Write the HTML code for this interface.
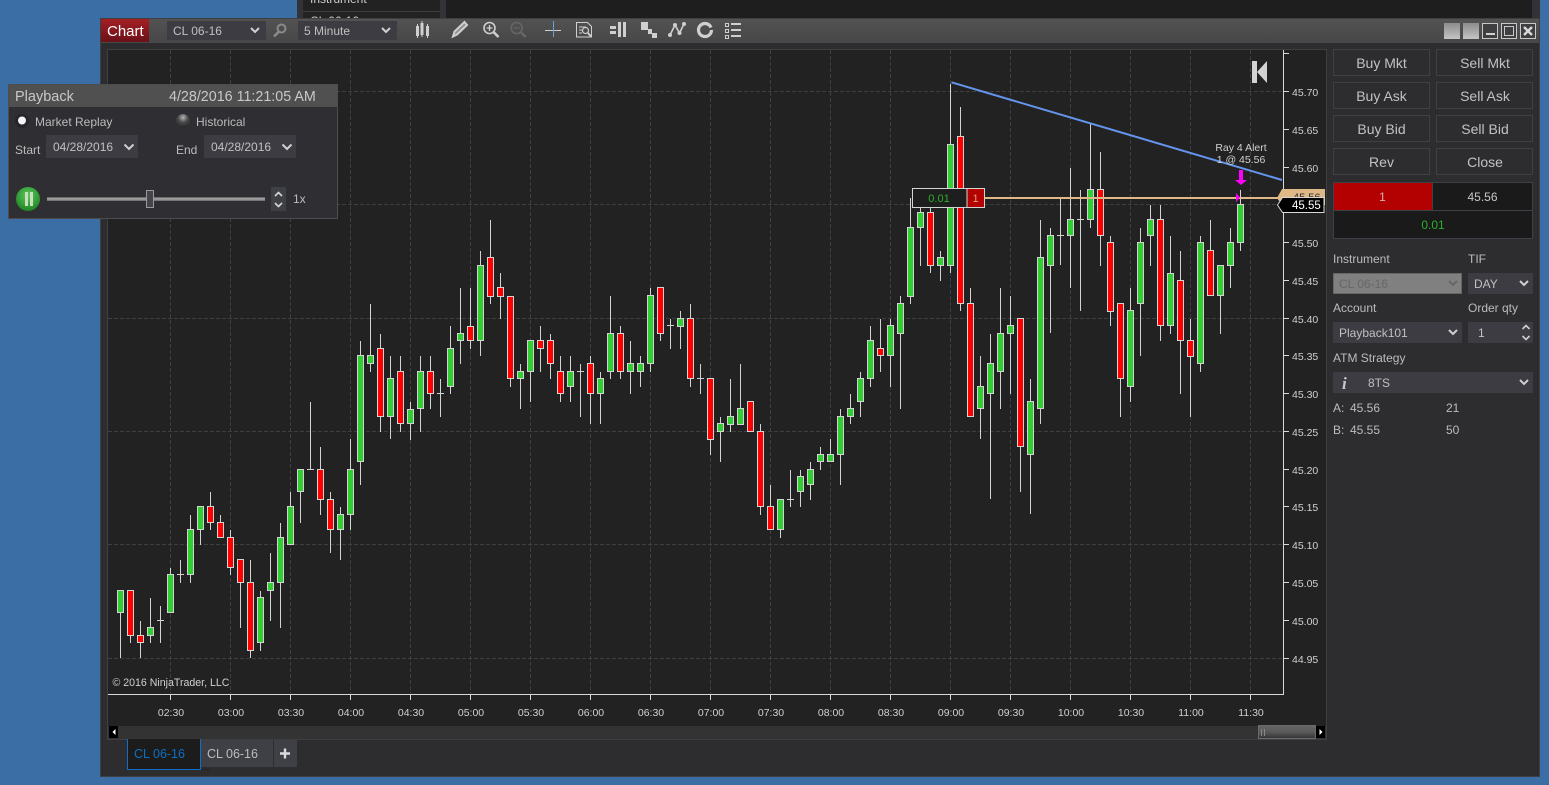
<!DOCTYPE html>
<html><head><meta charset="utf-8"><title>Chart</title>
<style>
html,body{margin:0;padding:0;background:#3a6ea5;overflow:hidden}
svg{display:block;position:absolute;left:0;top:0;font-family:"Liberation Sans",Arial,sans-serif}
text{white-space:pre}
.a text{font-size:10.5px;fill:#d0d0d0}
.tm text{font-size:10.5px;fill:#d0d0d0;text-anchor:middle}
.lb{font-size:12px;fill:#bcbcbc}
.btn{font-size:14px;fill:#c2c2c2;text-anchor:middle}
</style></head>
<body>
<svg width="1549" height="785" viewBox="0 0 1549 785" xmlns="http://www.w3.org/2000/svg">
<defs>
<linearGradient id="tb" x1="0" y1="0" x2="0" y2="1"><stop offset="0" stop-color="#525252"/><stop offset="1" stop-color="#474747"/></linearGradient>
<linearGradient id="rd" x1="0" y1="0" x2="0" y2="1"><stop offset="0" stop-color="#a31f24"/><stop offset="1" stop-color="#6b1118"/></linearGradient>
<linearGradient id="gb" x1="0" y1="0" x2="0" y2="1"><stop offset="0" stop-color="#8c8c8c"/><stop offset="1" stop-color="#c4c4c4"/></linearGradient>
<linearGradient id="sl" x1="0" y1="0" x2="0" y2="1"><stop offset="0" stop-color="#555"/><stop offset=".45" stop-color="#aaa"/><stop offset="1" stop-color="#666"/></linearGradient>
<linearGradient id="th" x1="0" y1="0" x2="0" y2="1"><stop offset="0" stop-color="#666"/><stop offset=".5" stop-color="#5a5a5a"/><stop offset="1" stop-color="#333"/></linearGradient>
<radialGradient id="gr" cx=".5" cy=".35" r=".7"><stop offset="0" stop-color="#5ec85e"/><stop offset="1" stop-color="#1b801f"/></radialGradient>
<radialGradient id="rad" cx=".5" cy=".25" r=".7"><stop offset="0" stop-color="#b5b5b5"/><stop offset=".5" stop-color="#4a4a4a"/><stop offset="1" stop-color="#2a2a2a"/></radialGradient>
</defs>

<!-- desktop -->
<rect width="1549" height="785" fill="#3a6ea5"/>
<!-- window behind -->
<rect x="297" y="0" width="1243" height="20" fill="#333337"/>
<rect x="303" y="0" width="137" height="20" fill="#222"/>
<rect x="303" y="11" width="137" height="1" fill="#3f3f3f"/>
<rect x="446" y="0" width="1086" height="20" fill="#1e1e1e"/>
<text x="310" y="3" font-size="12" fill="#ccc">Instrument</text>
<text x="310" y="25" font-size="12" fill="#ccc">CL 06-16</text>

<!-- main window -->
<rect x="100" y="18" width="1439.5" height="759" fill="#2d2d30"/>
<rect x="100.5" y="18.5" width="1439" height="758" fill="none" stroke="#3f3f41"/>
<rect x="101" y="19" width="1438" height="24" fill="url(#tb)"/>
<rect x="101" y="19" width="48" height="23" fill="url(#rd)"/>
<text x="107" y="36" font-size="15" fill="#fff">Chart</text>
<rect x="167" y="21" width="99" height="19" fill="#3c3c42"/>
<text x="173" y="35" font-size="12" fill="#c0c0c0">CL 06-16</text>
<path d="M251 28l4 4 4-4" fill="none" stroke="#d0d0d0" stroke-width="2"/>
<circle cx="281.5" cy="28.5" r="4" fill="none" stroke="#8a8a8a" stroke-width="2"/>
<path d="M278.5 32L274 36.5" stroke="#8a8a8a" stroke-width="2.5"/>
<rect x="298" y="21" width="99" height="19" fill="#3c3c42"/>
<text x="304" y="35" font-size="12" fill="#c0c0c0">5 Minute</text>
<path d="M382 28l4 4 4-4" fill="none" stroke="#d0d0d0" stroke-width="2"/>

<!-- toolbar icons -->
<g fill="#cfcfcf" stroke="none">
<path d="M416 26h3v10h-3zM417 24h1v14h-1zM420.5 23h3v12h-3zM421.5 21h1v16h-1zM426 26h3v10h-3zM427 24h1v14h-1z"/>
</g>
<g fill="none" stroke="#cfcfcf">
<path d="M453 36.500l1.500-5 10-9.500 2.500 3-10 9.500z" stroke-width="2" fill="#8f8f8f"/>
<circle cx="489.5" cy="28" r="5.5" stroke-width="1.6"/>
<path d="M486.5 28h6M489.5 25v6" stroke-width="1.3"/>
<path d="M493.5 32l5 5" stroke-width="2.6"/>
<g stroke="#666"><circle cx="516.7" cy="28" r="5.5" stroke-width="1.6"/><path d="M513.7 28h6" stroke-width="1.3"/><path d="M520.7 32l5 5" stroke-width="2.6"/></g>
<path d="M545 30.5h16" stroke="#cfcfcf" stroke-width="1"/>
<path d="M553.5 21v16" stroke="#6f9fd8" stroke-width="1"/>
<path d="M576.5 22.5h11l4 4v10.5h-15z" stroke-width="1"/>
<path d="M579 27h7M579 30h3M579 33h3" stroke-width="1"/>
<circle cx="585.5" cy="30.5" r="3" stroke-width="1.2"/><path d="M588 33l3 3.5" stroke-width="2"/>
</g>
<g fill="#cfcfcf">
<path d="M610 26h6v3h-6zM610 31h6v3h-6zM618 22h3v15h-3zM623 22h3v15h-3z"/>
<path d="M641 22h7v8h-7zM648 29h4v5h-4zM652 33h5v5h-5z"/>
<circle cx="670" cy="35" r="2"/><circle cx="675" cy="25" r="2"/><circle cx="679.5" cy="33" r="2"/><circle cx="684" cy="24" r="2"/>
<path d="M725.500 23.500h3v3h-3zM725.500 29.500h3v3h-3zM725.500 35.500h3v3h-3z" fill="none" stroke="#cfcfcf" stroke-width="1"/>
<path d="M731 23h10v2h-10zM731 29h10v2h-10zM731 35h10v2h-10z"/>
</g>
<path d="M670 35l5-10 4.500 8L684 24" fill="none" stroke="#cfcfcf" stroke-width="1.6"/>
<path d="M711 27.500A6.500 6.500 0 1 0 711.500 30" fill="none" stroke="#cfcfcf" stroke-width="3.2"/>

<!-- window controls -->
<rect x="1444" y="23" width="16" height="16" fill="url(#gb)"/>
<rect x="1463" y="23" width="16" height="16" fill="url(#gb)"/>
<rect x="1482.5" y="23.5" width="15" height="15" fill="#3f3f41" stroke="#c8c8c8"/>
<rect x="1486" y="33" width="9" height="2" fill="#d0d0d0"/>
<rect x="1501.5" y="23.5" width="15" height="15" fill="#3f3f41" stroke="#c8c8c8"/>
<rect x="1504.5" y="26.5" width="9" height="9" fill="none" stroke="#c8c8c8"/>
<rect x="1520.5" y="23.5" width="15" height="15" fill="#3f3f41" stroke="#c8c8c8"/>
<path d="M1524 27l8 8M1532 27l-8 8" stroke="#d8d8d8" stroke-width="2.4"/>

<!-- chart panel -->
<rect x="107.5" y="49.5" width="1219" height="690" fill="#222" stroke="#3f3f41"/>
<g stroke="#3f3f3f" stroke-width="1" stroke-dasharray="4 2" fill="none">
<path d="M170.5 50V694M230.5 50V694M290.5 50V694M350.5 50V694M410.5 50V694M470.5 50V694M530.5 50V694M590.5 50V694M650.5 50V694M710.5 50V694M770.5 50V694M830.5 50V694M890.5 50V694M950.5 50V694M1010.5 50V694M1070.5 50V694M1130.5 50V694M1190.5 50V694M1250.5 50V694"/>
<path d="M108 91.5H1283M108 204.5H1283M108 318.5H1283M108 431.5H1283M108 544.5H1283M108 658.5H1283"/>
</g>

<!-- wicks -->
<path stroke="#d3d3d3" stroke-width="1" fill="none" d="M120.5 590V658M130.5 590V643M140.5 621V658M150.5 598V643M160.5 606V643M170.5 568V612M180.5 560V583M190.5 515V583M200.5 506V545M210.5 492V530M220.5 515V537M230.5 530V575M240.5 559V628M250.5 560V658M260.5 591V651M270.5 553V621M280.5 523V628M290.5 492V544M300.5 469V523M310.5 402V469M320.5 447V515M330.5 492V553M340.5 507V560M350.5 439V530M360.5 341V485M370.5 304V372M380.5 334V432M390.5 356V439M400.5 356V432M410.5 402V440M420.5 356V432M430.5 356V409M440.5 379V417M450.5 326V394M460.5 288V364M470.5 288V349M480.5 251V356M490.5 220V304M500.5 273V319M510.5 296V387M520.5 364V409M530.5 340V402M540.5 326V372M550.5 334V379M560.5 356V402M570.5 356V402M580.5 364V417M590.5 356V424M600.5 372V424M610.5 296V379M620.5 326V379M630.5 341V394M640.5 356V387M650.5 288V372M660.5 287V341M670.5 319V349M680.5 311V349M690.5 304V387M700.5 364V394M710.5 378V455M720.5 417V462M730.5 379V432M740.5 364V424M760.5 424V515M770.5 485V529M780.5 499V538M790.5 470V507M800.5 470V507M810.5 462V500M820.5 447V470M830.5 439V461M840.5 409V485M850.5 394V424M860.5 372V417M870.5 326V387M880.5 319V372M890.5 319V387M900.5 296V409M910.5 198V304M920.5 190V266M930.5 190V273M940.5 251V281M950.5 84V273M960.5 107V311M970.5 288V416M980.5 356V439M990.5 334V499M1000.5 288V409M1010.5 296V394M1020.5 318V492M1030.5 379V514M1040.5 220V424M1050.5 228V333M1060.5 198V265M1070.5 168V288M1080.5 190V311M1090.5 123V228M1100.5 152V266M1110.5 236V326M1120.5 303V417M1130.5 288V402M1140.5 228V356M1150.5 205V266M1160.5 205V341M1170.5 236V334M1180.5 251V394M1190.5 319V417M1200.5 236V372M1210.5 220V295M1220.5 265V334M1230.5 228V288M1240.5 190V251"/>
<!-- doji -->
<path stroke="#d3d3d3" stroke-width="1" fill="none" d="M157 620.5h7M177 574.5h7M307 469.5h7M437 393.5h7M577 371.5h7M667 325.5h7M697 378.5h7M787 499.5h7M1057 235.5h7M1077 219.5h7"/>
<!-- green bodies -->
<path fill="#32cd32" stroke="#d3d3d3" stroke-width="1" d="M117.5 590.5h6v22h-6zM147.5 627.5h6v8h-6zM167.5 574.5h6v38h-6zM187.5 529.5h6v45h-6zM197.5 506.5h6v23h-6zM257.5 597.5h6v45h-6zM267.5 582.5h6v8h-6zM277.5 537.5h6v45h-6zM287.5 506.5h6v38h-6zM297.5 469.5h6v22h-6zM337.5 514.5h6v15h-6zM347.5 469.5h6v45h-6zM357.5 355.5h6v106h-6zM367.5 355.5h6v8h-6zM387.5 378.5h6v38h-6zM407.5 409.5h6v14h-6zM417.5 371.5h6v37h-6zM447.5 348.5h6v38h-6zM457.5 333.5h6v7h-6zM477.5 265.5h6v75h-6zM517.5 371.5h6v7h-6zM527.5 340.5h6v31h-6zM567.5 371.5h6v15h-6zM597.5 378.5h6v15h-6zM607.5 333.5h6v38h-6zM627.5 363.5h6v8h-6zM637.5 363.5h6v8h-6zM647.5 295.5h6v68h-6zM677.5 318.5h6v8h-6zM717.5 423.5h6v8h-6zM727.5 416.5h6v8h-6zM737.5 408.5h6v16h-6zM777.5 499.5h6v30h-6zM797.5 476.5h6v15h-6zM807.5 469.5h6v15h-6zM817.5 454.5h6v7h-6zM827.5 454.5h6v7h-6zM837.5 416.5h6v38h-6zM847.5 408.5h6v8h-6zM857.5 378.5h6v23h-6zM867.5 340.5h6v38h-6zM887.5 325.5h6v30h-6zM897.5 303.5h6v30h-6zM907.5 227.5h6v69h-6zM917.5 212.5h6v15h-6zM937.5 257.5h6v8h-6zM947.5 144.5h6v121h-6zM977.5 386.5h6v22h-6zM987.5 363.5h6v30h-6zM997.5 333.5h6v38h-6zM1007.5 325.5h6v8h-6zM1027.5 401.5h6v53h-6zM1037.5 257.5h6v151h-6zM1047.5 235.5h6v30h-6zM1067.5 219.5h6v16h-6zM1087.5 189.5h6v30h-6zM1127.5 310.5h6v76h-6zM1137.5 242.5h6v61h-6zM1147.5 219.5h6v16h-6zM1167.5 273.5h6v52h-6zM1197.5 242.5h6v121h-6zM1217.5 265.5h6v30h-6zM1227.5 242.5h6v23h-6zM1237.5 204.5h6v38h-6z"/>
<!-- red bodies -->
<path fill="#ff0000" stroke="#d3d3d3" stroke-width="1" d="M127.5 590.5h6v45h-6zM137.5 635.5h6v7h-6zM207.5 506.5h6v16h-6zM217.5 522.5h6v15h-6zM227.5 537.5h6v30h-6zM237.5 559.5h6v23h-6zM247.5 582.5h6v68h-6zM317.5 469.5h6v30h-6zM327.5 499.5h6v30h-6zM377.5 348.5h6v68h-6zM397.5 371.5h6v52h-6zM427.5 371.5h6v22h-6zM467.5 326.5h6v14h-6zM487.5 257.5h6v39h-6zM497.5 287.5h6v9h-6zM507.5 296.5h6v82h-6zM537.5 340.5h6v8h-6zM547.5 340.5h6v23h-6zM557.5 371.5h6v22h-6zM587.5 363.5h6v30h-6zM617.5 333.5h6v38h-6zM657.5 287.5h6v46h-6zM687.5 318.5h6v60h-6zM707.5 378.5h6v61h-6zM747.5 401.5h6v30h-6zM757.5 431.5h6v75h-6zM767.5 506.5h6v23h-6zM877.5 348.5h6v7h-6zM927.5 212.5h6v53h-6zM957.5 136.5h6v167h-6zM967.5 303.5h6v113h-6zM1017.5 318.5h6v128h-6zM1097.5 189.5h6v46h-6zM1107.5 242.5h6v69h-6zM1117.5 303.5h6v75h-6zM1157.5 219.5h6v106h-6zM1177.5 280.5h6v60h-6zM1187.5 340.5h6v16h-6zM1207.5 250.5h6v45h-6z"/>

<!-- axes -->
<path d="M108 694.5H1283.5V50" fill="none" stroke="#d8d8d8" stroke-width="1"/>
<path stroke="#d8d8d8" d="M1284 53.5h5M1284 91.5h5M1284 129.5h5M1284 167.5h5M1284 242.5h5M1284 280.5h5M1284 318.5h5M1284 355.5h5M1284 393.5h5M1284 431.5h5M1284 469.5h5M1284 506.5h5M1284 544.5h5M1284 582.5h5M1284 620.5h5M1284 658.5h5"/>
<path stroke="#d8d8d8" d="M170.5 695v5M230.5 695v5M290.5 695v5M350.5 695v5M410.5 695v5M470.5 695v5M530.5 695v5M590.5 695v5M650.5 695v5M710.5 695v5M770.5 695v5M830.5 695v5M890.5 695v5M950.5 695v5M1010.5 695v5M1070.5 695v5M1130.5 695v5M1190.5 695v5M1250.5 695v5"/>
<g class="a">
<text x="1292" y="96">45.70</text><text x="1292" y="134">45.65</text><text x="1292" y="172">45.60</text>
<text x="1292" y="247">45.50</text><text x="1292" y="285">45.45</text><text x="1292" y="323">45.40</text>
<text x="1292" y="360">45.35</text><text x="1292" y="398">45.30</text><text x="1292" y="436">45.25</text>
<text x="1292" y="474">45.20</text><text x="1292" y="511">45.15</text><text x="1292" y="549">45.10</text>
<text x="1292" y="587">45.05</text><text x="1292" y="625">45.00</text><text x="1292" y="663">44.95</text>
</g>
<g class="tm">
<text x="171" y="716">02:30</text><text x="231" y="716">03:00</text><text x="291" y="716">03:30</text><text x="351" y="716">04:00</text>
<text x="411" y="716">04:30</text><text x="471" y="716">05:00</text><text x="531" y="716">05:30</text><text x="591" y="716">06:00</text>
<text x="651" y="716">06:30</text><text x="711" y="716">07:00</text><text x="771" y="716">07:30</text><text x="831" y="716">08:00</text>
<text x="891" y="716">08:30</text><text x="951" y="716">09:00</text><text x="1011" y="716">09:30</text><text x="1071" y="716">10:00</text>
<text x="1131" y="716">10:30</text><text x="1191" y="716">11:00</text><text x="1251" y="716">11:30</text>
</g>
<text x="112.500" y="686" font-size="10.600" fill="#d0d0d0">© 2016 NinjaTrader, LLC</text>

<!-- K icon -->
<path d="M1252 61h5v22h-5zM1267 61v22l-10-11z" fill="#d3d3d3"/>

<!-- drawings -->
<path d="M951.500 82.300L1282 180" stroke="#6495ed" stroke-width="2" fill="none"/>
<rect x="985" y="197" width="293" height="2" fill="#deb887"/>
<text x="1241" y="151" font-size="10.5" fill="#d0d0d0" text-anchor="middle">Ray 4 Alert</text>
<text x="1241" y="163" font-size="10.5" fill="#d0d0d0" text-anchor="middle">1 @ 45.56</text>
<path d="M1239 170h4v10h4l-6 5-6-5h4z" fill="#ff00ff"/>
<path d="M1236 193l4 4.500-4 4.500z" fill="#ff00ff"/>

<!-- position label -->
<rect x="912.500" y="188.500" width="55" height="19" fill="#1e1e1e" stroke="#d3d3d3"/>
<rect x="967" y="188.500" width="17.500" height="19" fill="#b30000" stroke="#d3d3d3"/>
<text x="939" y="202" font-size="11" fill="#2ab02a" text-anchor="middle">0.01</text>
<text x="975.500" y="202" font-size="11" fill="#e0a070" text-anchor="middle">1</text>

<!-- price tags -->
<path d="M1277 198l5-9h43v16h-43z" fill="#deb887"/>
<text x="1293" y="201" font-size="11" fill="#333">45.56</text>
<path d="M1277.500 205l5-7.500h41.500v15h-41.500z" fill="#000" stroke="#d8d8d8"/>
<text x="1292" y="209" font-size="11.500" fill="#fff">45.55</text>

<!-- scrollbar -->
<rect x="108" y="726" width="1218" height="13" fill="#333"/>
<rect x="109" y="726" width="9" height="12" fill="#000"/>
<path d="M115.500 729v6l-3-3z" fill="#fff"/>
<rect x="1258.500" y="725.500" width="57" height="13" fill="url(#th)" stroke="#6a6a6a"/>
<path d="M1261.500 729v7M1264.500 729v7" stroke="#888"/>
<rect x="1316" y="726" width="9" height="12" fill="#000"/>
<path d="M1319.500 729v6l3-3z" fill="#fff"/>

<!-- tabs -->
<rect x="127.500" y="739" width="73" height="30.500" fill="#1c1c1c"/>
<path d="M127.500 739v30.500h73V739" fill="none" stroke="#0f6fc6"/>
<rect x="201" y="769" width="9" height="1" fill="#222"/>
<text x="134" y="758" font-size="12.500" fill="#0f6fc0">CL 06-16</text>
<rect x="201" y="740" width="72" height="27" fill="#3f3f46"/>
<text x="207" y="758" font-size="12.500" fill="#bdbdbd">CL 06-16</text>
<rect x="274" y="740" width="23" height="27" fill="#3f3f46"/>
<path d="M285 748.500v10M280 753.500h10" stroke="#dcdcdc" stroke-width="2.400"/>

<!-- right panel buttons -->
<g fill="#2d2d30" stroke="#3f3f46">
<rect x="1333.500" y="49.500" width="96" height="26"/><rect x="1436.500" y="49.500" width="96" height="26"/>
<rect x="1333.500" y="82.500" width="96" height="26"/><rect x="1436.500" y="82.500" width="96" height="26"/>
<rect x="1333.500" y="115.500" width="96" height="26"/><rect x="1436.500" y="115.500" width="96" height="26"/>
<rect x="1333.500" y="148.500" width="96" height="26"/><rect x="1436.500" y="148.500" width="96" height="26"/>
</g>
<text class="btn" x="1381.500" y="68">Buy Mkt</text><text class="btn" x="1485" y="68">Sell Mkt</text>
<text class="btn" x="1381.500" y="101">Buy Ask</text><text class="btn" x="1485" y="101">Sell Ask</text>
<text class="btn" x="1381.500" y="134">Buy Bid</text><text class="btn" x="1485" y="134">Sell Bid</text>
<text class="btn" x="1381.500" y="167">Rev</text><text class="btn" x="1485" y="167">Close</text>

<!-- position box -->
<rect x="1333.500" y="182.500" width="199" height="56" fill="#1a1a1a" stroke="#3f3f46"/>
<rect x="1334" y="183" width="98" height="27" fill="#b30000"/>
<path d="M1334 210.500h198M1432.500 183v27" stroke="#3f3f46"/>
<text x="1382.500" y="201" font-size="12" fill="#d8b0b0" text-anchor="middle">1</text>
<text x="1482.500" y="201" font-size="12" fill="#c8c8c8" text-anchor="middle">45.56</text>
<text x="1433" y="229" font-size="12" fill="#2ab02a" text-anchor="middle">0.01</text>

<!-- order form -->
<text class="lb" x="1333" y="263">Instrument</text><text class="lb" x="1468" y="263">TIF</text>
<rect x="1333.500" y="273.500" width="128" height="20" fill="#808080" stroke="#666"/>
<text x="1339" y="288" font-size="12" fill="#666">CL 06-16</text>
<path d="M1449 281l4 4 4-4" fill="none" stroke="#666" stroke-width="2"/>
<rect x="1468" y="273" width="65" height="21" fill="#3c3c42"/>
<text x="1474" y="288" font-size="12" fill="#c0c0c0">DAY</text>
<path d="M1520 281l4 4 4-4" fill="none" stroke="#d0d0d0" stroke-width="2"/>
<text class="lb" x="1333" y="312">Account</text><text class="lb" x="1468" y="312">Order qty</text>
<rect x="1333" y="322" width="129" height="21" fill="#3c3c42"/>
<text x="1339" y="337" font-size="12" fill="#c0c0c0">Playback101</text>
<path d="M1449 330l4 4 4-4" fill="none" stroke="#d0d0d0" stroke-width="2"/>
<rect x="1468" y="322" width="65" height="21" fill="#3c3c42"/>
<text x="1478" y="337" font-size="12" fill="#c0c0c0">1</text>
<path d="M1522.500 329l3.500-3.500 3.500 3.500M1522.500 336l3.500 3.500 3.500-3.500" fill="none" stroke="#d0d0d0" stroke-width="1.600"/>
<text class="lb" x="1333" y="362">ATM Strategy</text>
<rect x="1333" y="372" width="200" height="21" fill="#3c3c42"/>
<text x="1342" y="389" font-size="17" font-style="italic" font-weight="bold" fill="#c8c8c8" font-family="Liberation Serif,serif">i</text>
<text x="1368" y="387" font-size="12" fill="#c0c0c0">8TS</text>
<path d="M1520 380l4 4 4-4" fill="none" stroke="#d0d0d0" stroke-width="2"/>
<text class="lb" x="1333" y="412">A:</text><text class="lb" x="1350" y="412">45.56</text><text class="lb" x="1446" y="412">21</text>
<text class="lb" x="1333" y="434">B:</text><text class="lb" x="1350" y="434">45.55</text><text class="lb" x="1446" y="434">50</text>

<!-- playback panel -->
<rect x="8.500" y="84.500" width="329" height="134" fill="#2e2e33" stroke="#4d4d4d"/>
<rect x="9" y="85" width="328" height="22" fill="#505050"/>
<text x="15" y="101" font-size="14.500" fill="#c8c8c8">Playback</text>
<text x="169" y="101" font-size="14.300" fill="#c8c8c8">4/28/2016 11:21:05 AM</text>
<circle cx="22" cy="121" r="7" fill="#26262a"/>
<circle cx="22" cy="120.500" r="4" fill="#f4f4f4"/>
<text class="lb" x="35" y="126">Market Replay</text>
<circle cx="183" cy="121" r="7" fill="url(#rad)"/>
<text class="lb" x="196" y="126">Historical</text>
<text class="lb" x="15" y="154">Start</text>
<rect x="46" y="135" width="92" height="23" fill="#3c3c42"/>
<text x="53" y="151" font-size="12" fill="#c0c0c0">04/28/2016</text>
<path d="M124.500 144.500l4.500 4.500 4.500-4.500" fill="none" stroke="#d0d0d0" stroke-width="2"/>
<text class="lb" x="176" y="154">End</text>
<rect x="204" y="135" width="92" height="23" fill="#3c3c42"/>
<text x="211" y="151" font-size="12" fill="#c0c0c0">04/28/2016</text>
<path d="M282.500 144.500l4.500 4.500 4.500-4.500" fill="none" stroke="#d0d0d0" stroke-width="2"/>
<circle cx="28" cy="199" r="12" fill="url(#gr)"/>
<rect x="25" y="192" width="3" height="14" fill="#c8e0c0"/>
<rect x="30" y="192" width="3" height="14" fill="#c8e0c0"/>
<rect x="47" y="197" width="218" height="4" fill="url(#sl)"/>
<rect x="146.500" y="190.500" width="7" height="17" fill="#44444a" stroke="#9a9a9a"/>
<rect x="271" y="187" width="15" height="24" fill="#3f3f46"/>
<path d="M275 196l3.500-3.500 3.500 3.500M275 203l3.500 3.500 3.500-3.500" fill="none" stroke="#d8d8d8" stroke-width="1.600"/>
<text class="lb" x="293" y="203">1x</text>
</svg>
</body></html>
